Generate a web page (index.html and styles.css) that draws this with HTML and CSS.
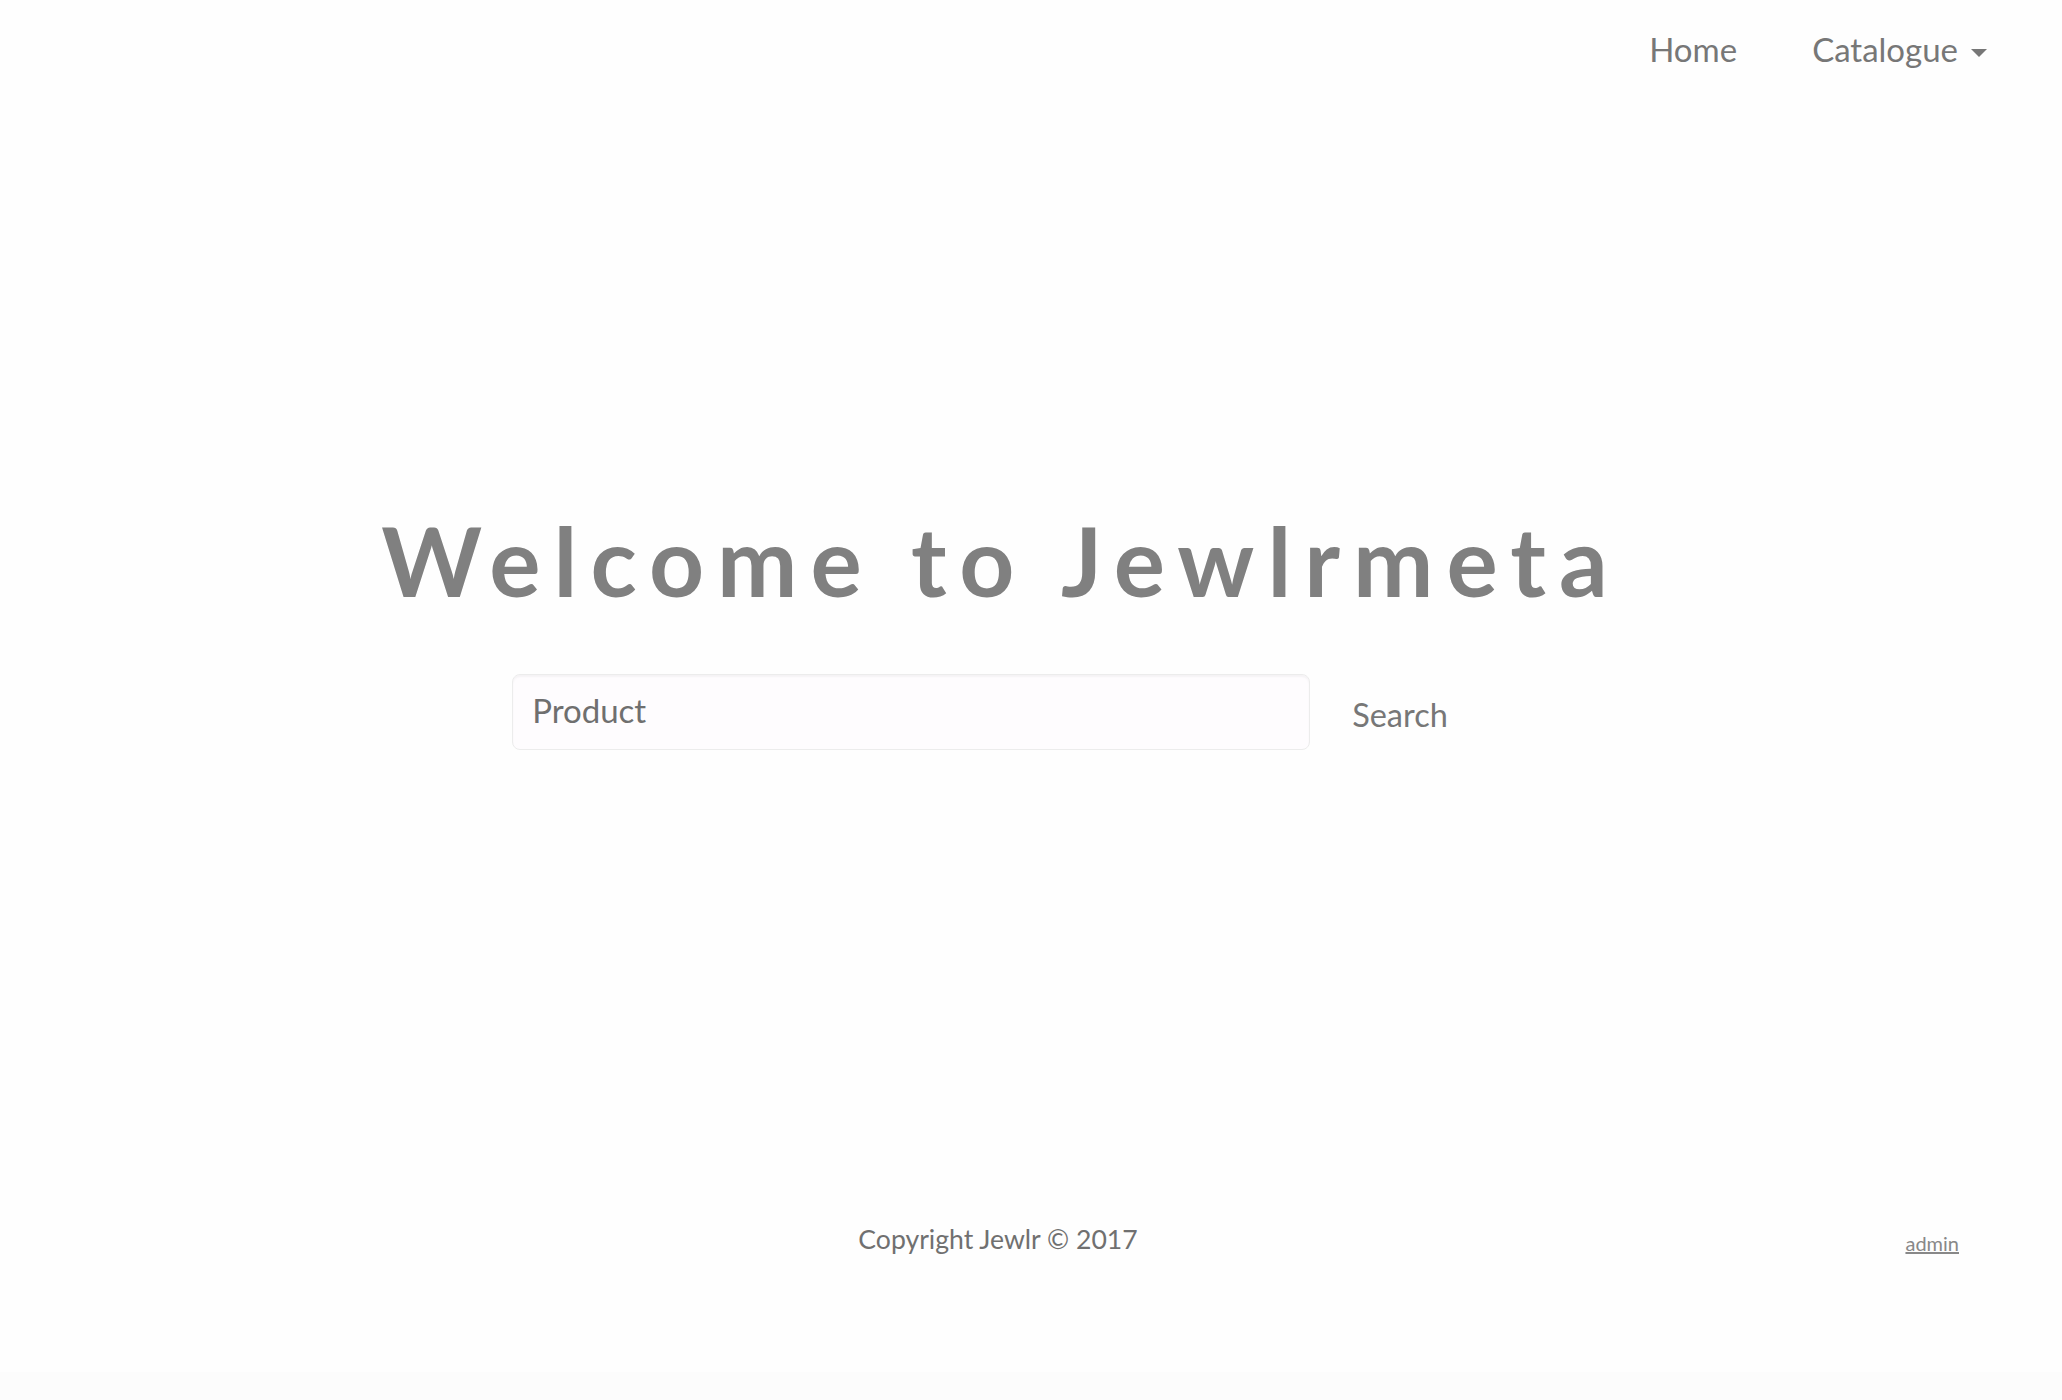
FILE: index.html
```html
<!DOCTYPE html>
<html lang="en">
<head>
<meta charset="utf-8">
<title>Jewlrmeta</title>
<link rel="stylesheet" href="styles.css">
</head>
<body>
<div class="page">
  <header class="navbar">
    <a class="nav-link" href="#">Home</a>
    <a class="nav-link dropdown" href="#">Catalogue<span class="caret"></span></a>
  </header>
  <main class="hero">
    <h1 class="title">Welcome to Jewlrmeta</h1>
    <form class="search">
      <input class="search-input" type="text" value="Product">
      <button class="search-btn" type="button">Search</button>
    </form>
  </main>
  <footer class="footer">
    <p class="copyright">Copyright Jewlr © 2017</p>
    <a class="admin" href="#">admin</a>
  </footer>
</div>
<div class="bottom-strip"></div>
</body>
</html>
```
FILE: styles.css
```css
html, body {
  margin: 0;
  padding: 0;
}
body {
  background: #fefefe;
  font-family: Lato, "Open Sans", sans-serif;
  color: #777;
}
.page {
  height: 1372px;
  display: flex;
  flex-direction: column;
}
.navbar {
  display: flex;
  justify-content: flex-end;
  gap: 75px;
  padding: 28px 75px 0 0;
  height: 72px;
  box-sizing: border-box;
}
.nav-link {
  font-size: 33px;
  line-height: 1.2;
  color: #777;
  text-decoration: none;
  display: flex;
  align-items: center;
}
.caret {
  display: inline-block;
  width: 0;
  height: 0;
  margin-left: 13px;
  margin-top: 6px;
  border-top: 8px solid #777;
  border-left: 8px solid transparent;
  border-right: 8px solid transparent;
}
.hero {
  display: flex;
  flex-direction: column;
  align-items: center;
  padding-top: 430px;
  padding-right: 66px;
}
.title {
  margin: 0;
  padding-left: 6px;
  font-size: 96px;
  line-height: 1.2;
  font-weight: 700;
  letter-spacing: 13px;
  color: #808080;
}
.search {
  display: flex;
  align-items: center;
  margin-top: 57px;
  margin-left: 6px;
}
.search-input {
  width: 798px;
  height: 76px;
  box-sizing: border-box;
  border: 1px solid #ececec;
  border-radius: 8px;
  background: #fefcfe;
  box-shadow: inset 0 2px 2px rgba(0,0,0,0.04);
  padding: 0 19px 4px;
  font-family: Lato, "Open Sans", sans-serif;
  font-size: 33px;
  color: #6f6f6f;
  outline: none;
}
.search-btn {
  background: transparent;
  border: 0;
  padding: 4px 42px 0;
  font-family: Lato, "Open Sans", sans-serif;
  font-size: 32.5px;
  color: #777;
}
.footer {
  margin-top: auto;
  margin-bottom: 116px;
  display: flex;
  align-items: flex-end;
  justify-content: center;
  position: relative;
  padding-right: 66px;
}
.copyright {
  margin: 0;
  font-size: 26.6px;
  line-height: 1.2;
  color: #707070;
}
.admin {
  position: absolute;
  right: 103px;
  bottom: 1px;
  font-size: 20px;
  color: #888;
}
.bottom-strip {
  height: 28px;
  background: #fcfcfc;
}
```
